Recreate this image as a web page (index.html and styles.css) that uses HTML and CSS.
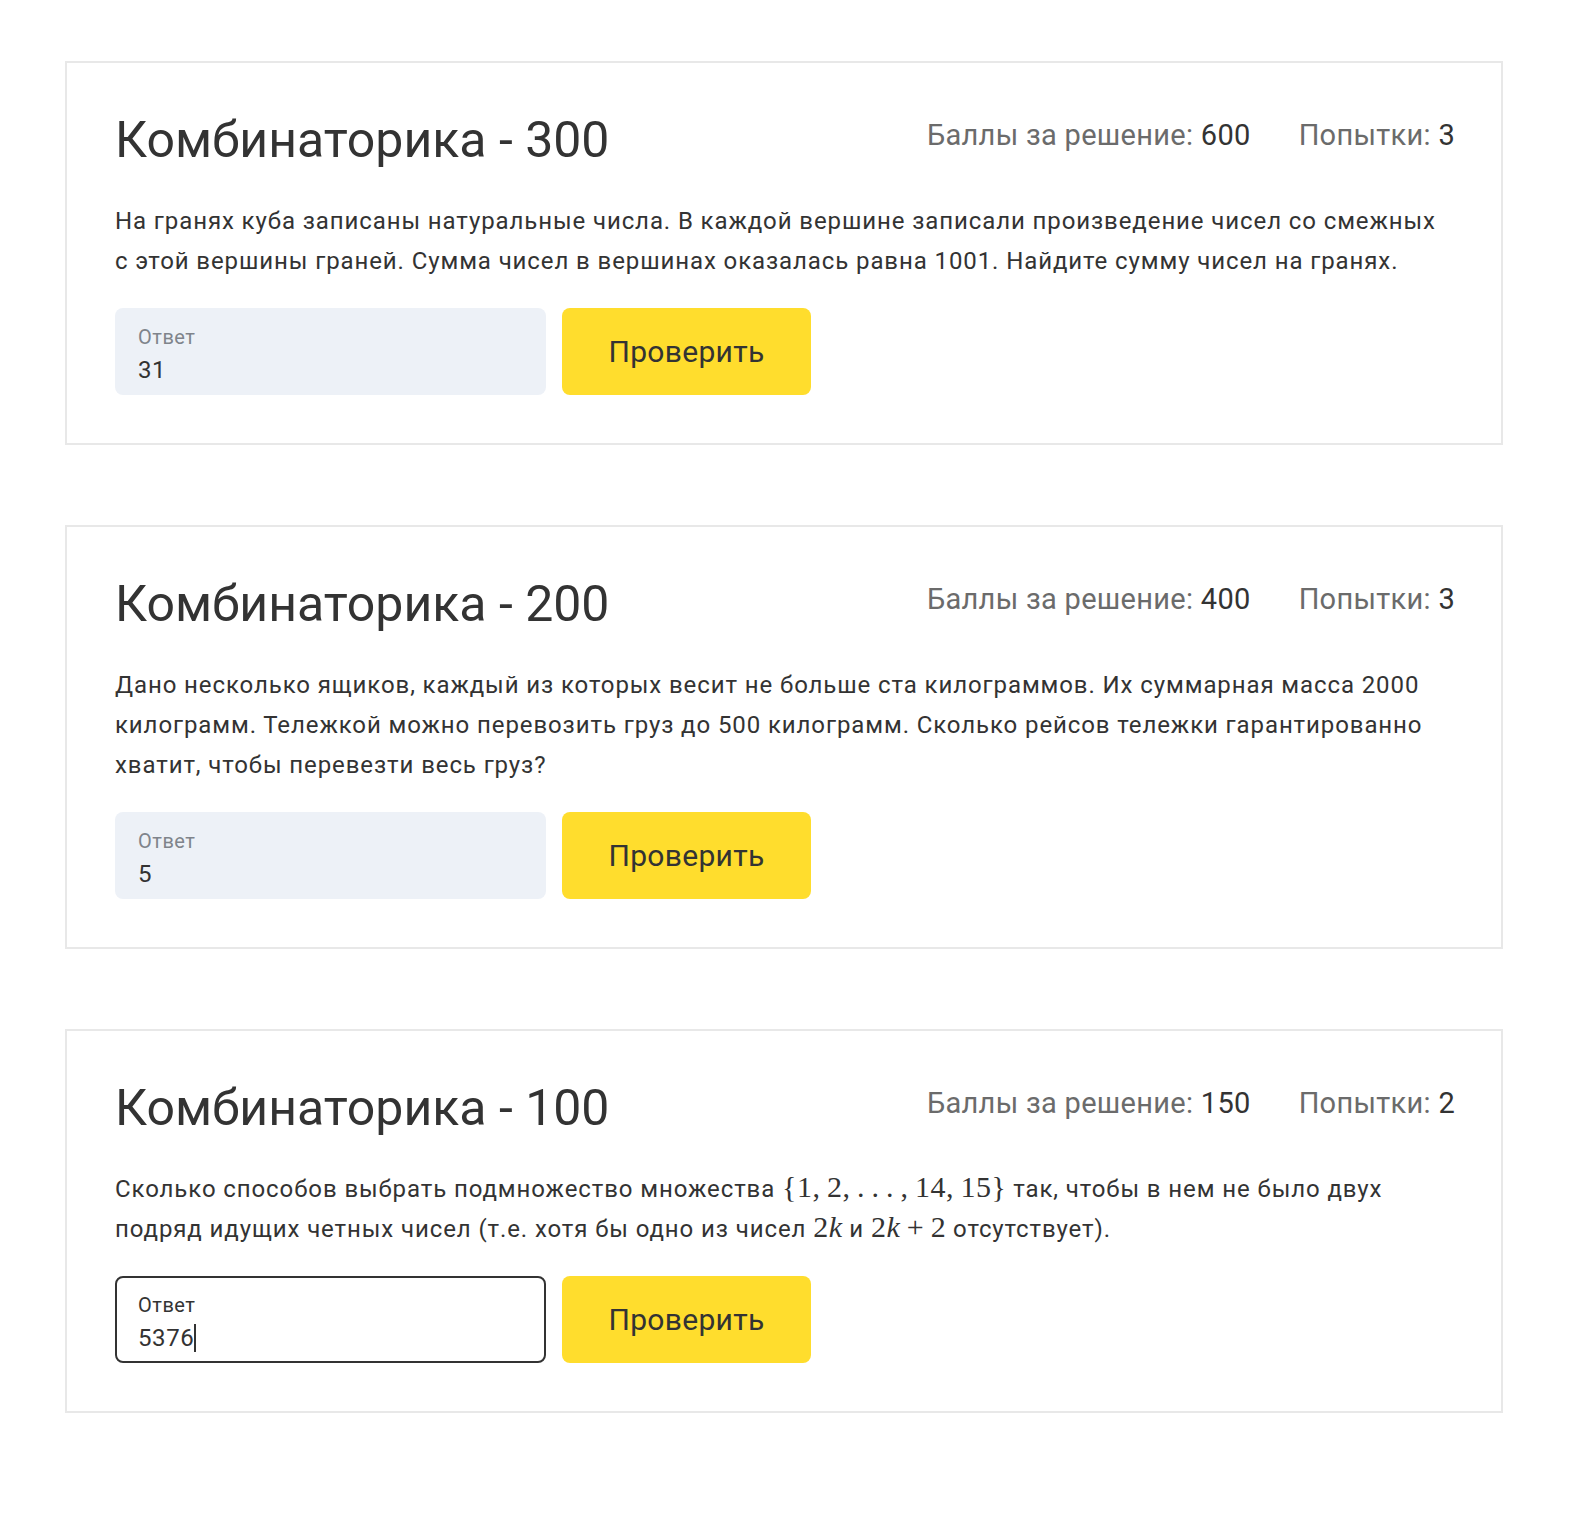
FILE: index.html
```html
<!DOCTYPE html>
<html lang="ru">
<head>
<meta charset="utf-8">
<title>Задачи</title>
<link rel="stylesheet" href="styles.css">
</head>
<body>
<main class="list">
  <section class="card">
    <header class="card-head">
      <h2 class="title">Комбинаторика - 300</h2>
      <div class="meta">
        <span class="meta-item">Баллы за решение: <b>600</b></span>
        <span class="meta-item">Попытки: <b>3</b></span>
      </div>
    </header>
    <p class="text">На гранях куба записаны натуральные числа. В каждой вершине записали произведение чисел со смежных с этой вершины граней. Сумма чисел в вершинах оказалась равна 1001. Найдите сумму чисел на гранях.</p>
    <div class="answer-row">
      <label class="field">
        <span class="field-label">Ответ</span>
        <span class="field-value">31</span>
      </label>
      <button class="check">Проверить</button>
    </div>
  </section>

  <section class="card">
    <header class="card-head">
      <h2 class="title">Комбинаторика - 200</h2>
      <div class="meta">
        <span class="meta-item">Баллы за решение: <b>400</b></span>
        <span class="meta-item">Попытки: <b>3</b></span>
      </div>
    </header>
    <p class="text">Дано несколько ящиков, каждый из которых весит не больше ста килограммов. Их суммарная масса 2000 килограмм. Тележкой можно перевозить груз до 500 килограмм. Сколько рейсов тележки гарантированно хватит, чтобы перевезти весь груз?</p>
    <div class="answer-row">
      <label class="field">
        <span class="field-label">Ответ</span>
        <span class="field-value">5</span>
      </label>
      <button class="check">Проверить</button>
    </div>
  </section>

  <section class="card">
    <header class="card-head">
      <h2 class="title">Комбинаторика - 100</h2>
      <div class="meta">
        <span class="meta-item">Баллы за решение: <b>150</b></span>
        <span class="meta-item">Попытки: <b>2</b></span>
      </div>
    </header>
    <p class="text">Сколько способов выбрать подмножество множества <span class="math">{1,&thinsp;2,&thinsp;.&thinsp;.&thinsp;.&thinsp;,&thinsp;14,&thinsp;15}</span> так, чтобы в нем не было двух подряд идущих четных чисел (т.е. хотя бы одно из чисел <span class="math">2<i>k</i></span> и <span class="math">2<i>k</i>&thinsp;+&thinsp;2</span> отсутствует).</p>
    <div class="answer-row">
      <label class="field field-active">
        <span class="field-label">Ответ</span>
        <span class="field-value">5376<span class="caret"></span></span>
      </label>
      <button class="check">Проверить</button>
    </div>
  </section>
</main>
</body>
</html>
```
FILE: styles.css
```css
* { box-sizing: border-box; }
html, body { margin: 0; background: #fff; }
body {
  font-family: Roboto, "Noto Sans", sans-serif;
  color: #333;
  padding: 61px 67px 100px 65px;
}
.list {
  display: flex;
  flex-direction: column;
  gap: 80px;
}
.card {
  border: 2px solid #e8e8e8;
  padding: 46px 48px 48px 48px;
}
.card-head {
  display: flex;
  justify-content: space-between;
  align-items: flex-start;
}
.title {
  margin: 0;
  font-weight: 400;
  font-size: 50px;
  line-height: 62px;
  color: #333;
}
.meta {
  display: flex;
  gap: 48px;
  padding-top: 6px;
  margin-right: -2px;
  font-size: 29px;
  letter-spacing: 0.3px;
  line-height: 40px;
  color: #6b6b6b;
}
.meta b { font-weight: 400; color: #333; }
.text {
  margin: 30px 0 0 0;
  font-size: 24px;
  letter-spacing: 0.9px;
  line-height: 40px;
  color: #333;
}
.math {
  font-family: "Liberation Serif", "DejaVu Serif", serif;
  font-size: 30px;
  letter-spacing: 0.5px;
  line-height: 1;
}
.math i { font-style: italic; }
.answer-row {
  display: flex;
  gap: 16px;
  margin-top: 27px;
}
.field {
  width: 431px;
  height: 87px;
  background: #edf1f7;
  border-radius: 8px;
  padding: 16px 23px 0 23px;
  display: flex;
  flex-direction: column;
}
.field-active {
  background: #fff;
  border: 2px solid #333;
  padding: 14px 21px 0 21px;
}
.field-label {
  font-size: 20px;
  letter-spacing: 0.5px;
  line-height: 26px;
  color: #7f848b;
}
.field-active .field-label { color: #333; }
.field-value {
  margin-top: 4px;
  font-size: 24px;
  letter-spacing: 0.6px;
  line-height: 32px;
  color: #333;
  display: flex;
  align-items: center;
}
.caret {
  display: inline-block;
  width: 2px;
  height: 28px;
  background: #333;
}
.check {
  width: 249px;
  height: 87px;
  background: #ffdd2d;
  border: none;
  border-radius: 8px;
  font-family: inherit;
  font-size: 30px;
  letter-spacing: 0.3px;
  color: #333;
  cursor: pointer;
}
```
